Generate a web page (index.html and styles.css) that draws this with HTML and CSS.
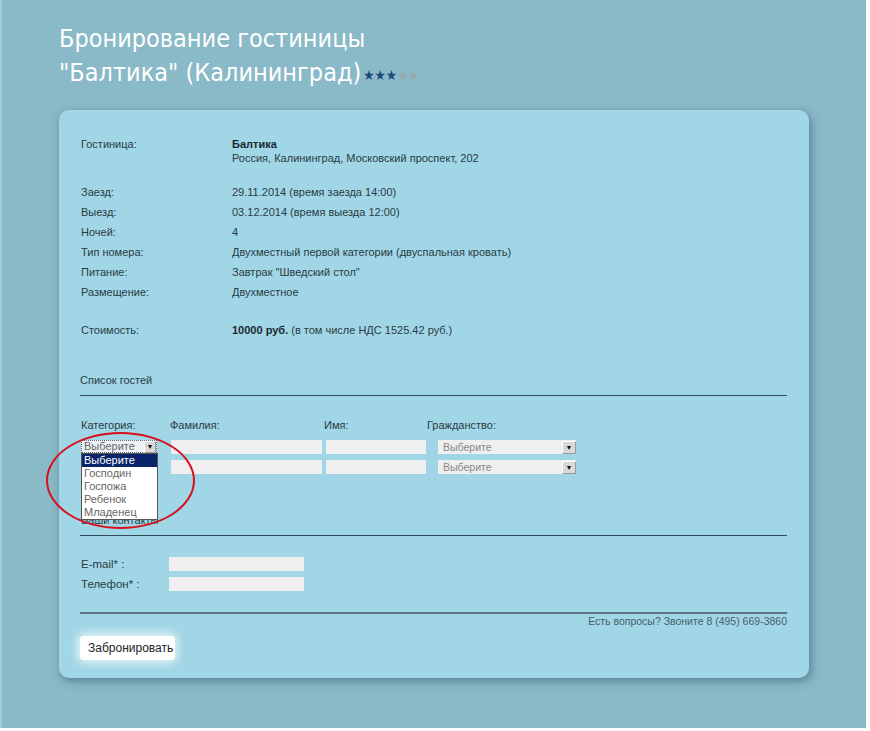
FILE: index.html
```html
<!DOCTYPE html>
<html lang="ru">
<head>
<meta charset="utf-8">
<title>Бронирование гостиницы</title>
<link rel="stylesheet" href="styles.css">
</head>
<body>
<div class="page">
  <h1 class="title">Бронирование гостиницы<br>"Балтика" (Калининград)<span class="stars"><span class="on">★★★</span><span class="off">★★</span></span></h1>
  <div class="card">
    <div class="info">
      <div class="row hotel"><div class="lbl">Гостиница:</div><div class="val"><b>Балтика</b><br>Россия, Калининград, Московский проспект, 202</div></div>
      <div class="row first"><div class="lbl">Заезд:</div><div class="val">29.11.2014 (время заезда 14:00)</div></div>
      <div class="row"><div class="lbl">Выезд:</div><div class="val">03.12.2014 (время выезда 12:00)</div></div>
      <div class="row"><div class="lbl">Ночей:</div><div class="val">4</div></div>
      <div class="row"><div class="lbl">Тип номера:</div><div class="val">Двухместный первой категории (двуспальная кровать)</div></div>
      <div class="row"><div class="lbl">Питание:</div><div class="val">Завтрак "Шведский стол"</div></div>
      <div class="row"><div class="lbl">Размещение:</div><div class="val">Двухместное</div></div>
      <div class="row cost"><div class="lbl">Стоимость:</div><div class="val"><b>10000 руб.</b> (в том числе НДС 1525.42 руб.)</div></div>
    </div>

    <div class="section">Список гостей</div>
    <div class="rule"></div>

    <div class="guests">
      <div class="ghead">
        <span class="c-cat">Категория:</span><span class="c-fam">Фамилия:</span><span class="c-name">Имя:</span><span class="c-cit">Гражданство:</span>
      </div>
      <div class="grow">
        <div class="catsel"><span class="cattext">Выберите</span><span class="arr small">▼</span></div>
        <div class="inp fam"></div><div class="inp name"></div>
        <div class="sel"><span>Выберите</span><span class="arr">▼</span></div>
      </div>
      <div class="grow">
        <div class="catsel blank"></div>
        <div class="inp fam"></div><div class="inp name"></div>
        <div class="sel"><span>Выберите</span><span class="arr">▼</span></div>
      </div>
      <ul class="dropdown">
        <li class="hl">Выберите</li>
        <li>Господин</li>
        <li>Госпожа</li>
        <li>Ребенок</li>
        <li>Младенец</li>
      </ul>
      <div class="ring"></div>
    </div>

    <div class="section contacts">Ваши контакты</div>
    <div class="rule"></div>

    <div class="contact">
      <div class="crow"><span class="clbl">E-mail* :</span><div class="inp cin"></div></div>
      <div class="crow"><span class="clbl">Телефон* :</span><div class="inp cin"></div></div>
    </div>

    <div class="rule r2"></div>
    <div class="phone">Есть вопросы? Звоните 8 (495) 669-3860</div>
    <button class="btn">Забронировать</button>
  </div>
</div>
</body>
</html>
```

FILE: styles.css
```css
html, body { margin: 0; padding: 0; background: #ffffff; }
body { font-family: "Liberation Sans", Arial, sans-serif; }
.page {
  width: 866px;
  height: 728px;
  background: #8ab9c8;
  border-left: 2px solid #a8cdd8;
  box-sizing: border-box;
  padding-top: 22px;
  overflow: hidden;
}
.title {
  margin: 0 0 0 57px;
  font-family: "DejaVu Sans Condensed", "DejaVu Sans", sans-serif;
  font-weight: normal;
  font-size: 25px;
  line-height: 34px;
  color: #ffffff;
}
.stars { font-size: 14px; margin-left: 2px; letter-spacing: 0; vertical-align: 1px; }
.stars .on { color: #1d4a7a; }
.stars .off { color: #9aa9b0; }
.card {
  margin: 18px 0 0 57px;
  width: 750px;
  height: 568px;
  box-sizing: border-box;
  background: #a0d6e6;
  border-radius: 10px;
  box-shadow: 2px 3px 10px rgba(40, 80, 100, 0.55);
  padding: 27px 22px 0 21px;
  color: #2b3b44;
  font-size: 11px;
  position: relative;
}
.row { display: grid; grid-template-columns: 151px 1fr; height: 20px; line-height: 14px; padding-left: 1px; }
.row.hotel { height: auto; }
.row.first { margin-top: 20px; }
.row.cost { margin-top: 18px; }
.val b { color: #1a2a32; }
.section { margin-top: 30px; line-height: 14px; }
.rule { height: 1px; background: #2e4c5a; margin-top: 8px; width: 707px; }
.guests { position: relative; margin-top: 22px; height: 95px; }
.ghead { display: flex; line-height: 14px; height: 22px; padding-left: 1px; }
.ghead .c-cat { width: 89px; }
.ghead .c-fam { width: 154px; }
.ghead .c-name { width: 103px; }
.grow { display: flex; height: 14px; margin-bottom: 6px; }
.catsel {
  width: 76px; height: 13px; margin-left: 1px; margin-right: 14px;
  border: 1px dotted #667; box-sizing: border-box; background: #eef3f5;
  display: flex; justify-content: space-between; align-items: center;
  color: #666; font-size: 11px;
}
.catsel.blank { border: none; background: transparent; }
.cattext { padding-left: 2px; line-height: 11px; }
.inp { background: #efefef; height: 14px; }
.inp.fam { width: 151px; margin-right: 4px; }
.inp.name { width: 100px; margin-right: 12px; }
.sel {
  width: 138px; height: 14px; background: #efefef; display: flex;
  justify-content: space-between; align-items: center; color: #888;
  font-size: 10.5px; padding-left: 5px; box-sizing: border-box;
}
.arr {
  width: 12px; height: 11px; background: #d9d9d9; border: 1px solid #999;
  border-top-color: #fff; border-left-color: #fff;
  font-size: 7px; line-height: 11px; text-align: center; color: #111;
}
.arr.small { width: 10px; height: 10px; line-height: 10px; }
.dropdown {
  position: absolute; left: 1px; top: 35px; width: 77px;
  margin: 0; padding: 0; list-style: none; background: #fff;
  border: 1px solid #555; box-sizing: border-box; z-index: 2;
  font-size: 11px; color: #666;
}
.dropdown li { height: 13px; line-height: 13px; padding-left: 2px; }
.dropdown li.hl { background: #0a246a; color: #fff; }
.ring {
  position: absolute; left: -34px; top: 14px; width: 149px; height: 97px;
  border: 2px solid #d8101c; border-radius: 50%; box-sizing: border-box; z-index: 3;
}
.section.contacts { margin-top: 0; padding-left: 1px; }
.contact { margin-top: 21px; padding-left: 1px; }
.crow { display: flex; height: 14px; margin-bottom: 6px; align-items: center; font-size: 11.5px; }
.clbl { width: 88px; }
.cin { width: 135px; height: 14px; }
.rule.r2 { margin-top: 21px; height: 2px; background: #5a7480; }
.phone { width: 707px; text-align: right; color: #4a5e68; font-size: 10.5px; line-height: 14px; }
.btn {
  margin-top: 8px; background: #ffffff; border: none; border-radius: 4px;
  padding: 0 8px; height: 24px; width: 95px;
  font-family: "Liberation Sans", Arial, sans-serif; font-size: 12px; color: #222;
  box-shadow: 0 0 8px 3px rgba(255, 255, 255, 0.7);
}
```
